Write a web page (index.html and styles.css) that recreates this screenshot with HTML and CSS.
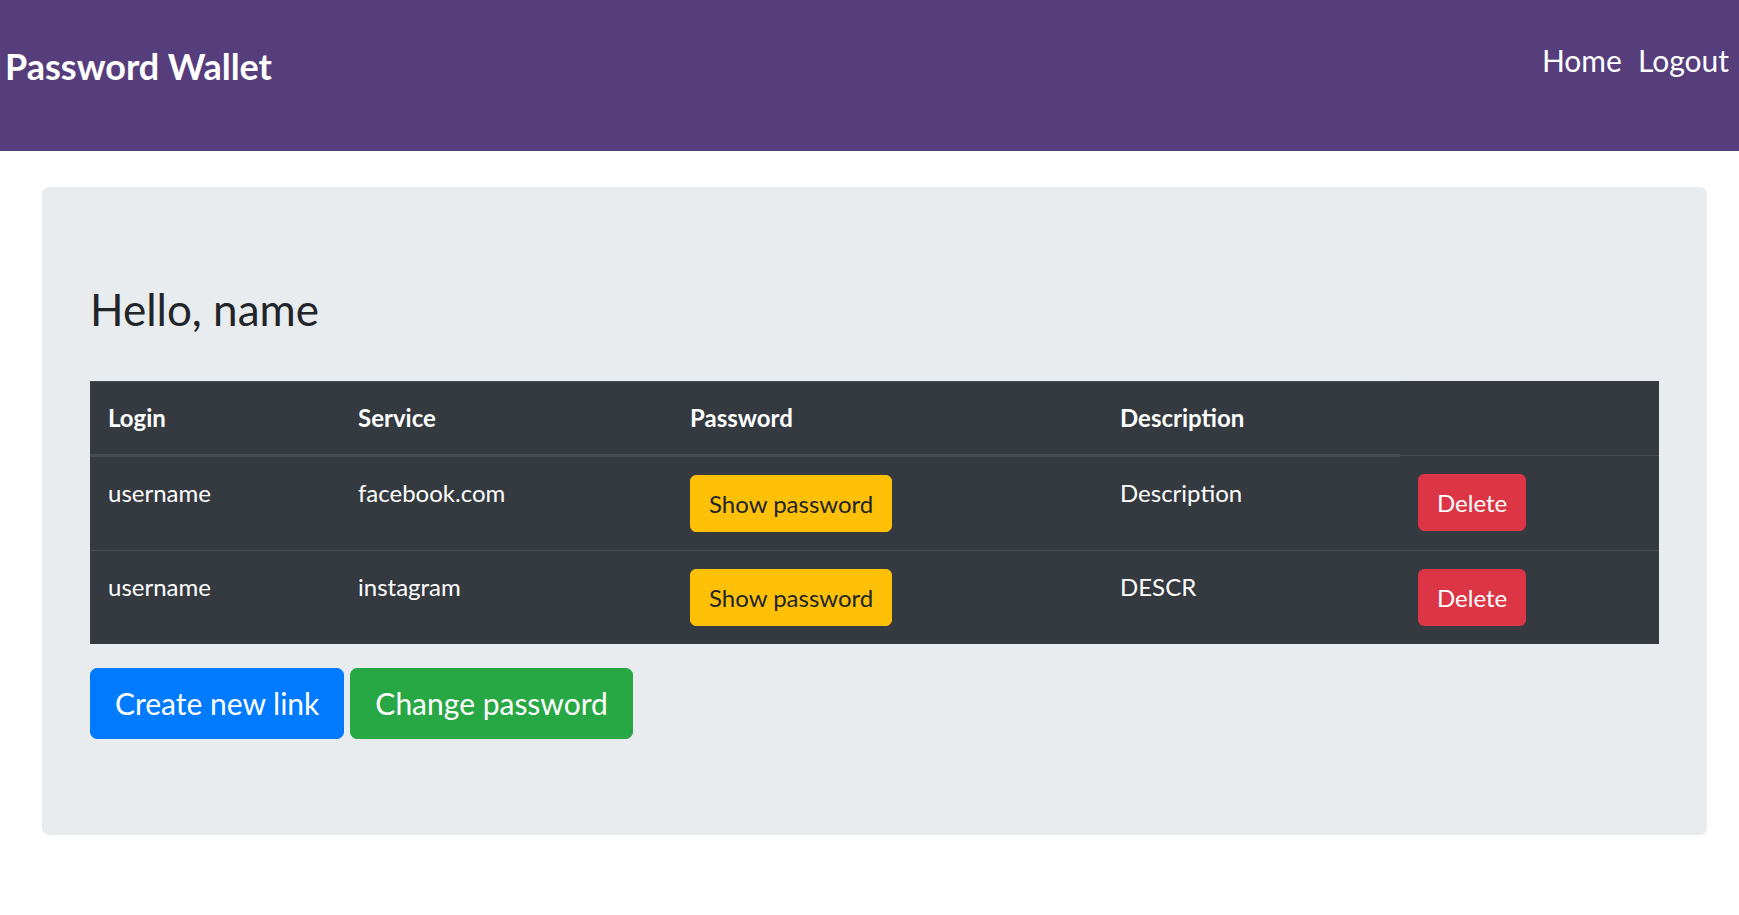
FILE: index.html
```html
<!DOCTYPE html>
<html lang="en">
<head>
<meta charset="utf-8">
<title>Password Wallet</title>
<link rel="stylesheet" href="styles.css">
</head>
<body>
<header class="topbar">
  <a class="brand" href="#">Password Wallet</a>
  <nav class="nav">
    <a class="nav-link" href="#">Home</a>
    <a class="nav-link" href="#">Logout</a>
  </nav>
</header>
<main class="jumbotron">
  <h2 class="greeting">Hello, name</h2>
  <table class="table-dark">
    <colgroup>
      <col class="c-login"><col class="c-service"><col class="c-password"><col class="c-desc"><col class="c-action">
    </colgroup>
    <thead>
      <tr>
        <th>Login</th>
        <th>Service</th>
        <th>Password</th>
        <th>Description</th>
      </tr>
    </thead>
    <tbody>
      <tr>
        <td>username</td>
        <td>facebook.com</td>
        <td><button class="btn btn-warning">Show password</button></td>
        <td>Description</td>
        <td><button class="btn btn-danger">Delete</button></td>
      </tr>
      <tr>
        <td>username</td>
        <td>instagram</td>
        <td><button class="btn btn-warning">Show password</button></td>
        <td>DESCR</td>
        <td><button class="btn btn-danger">Delete</button></td>
      </tr>
    </tbody>
  </table>
  <div class="actions">
    <button class="btn btn-lg btn-primary">Create new link</button>
    <button class="btn btn-lg btn-success">Change password</button>
  </div>
</main>
</body>
</html>
```

FILE: styles.css
```css
* { box-sizing: border-box; }

html, body {
  margin: 0;
  padding: 0;
  background: #ffffff;
  font-family: "Lato", "Open Sans", sans-serif;
  font-size: 24px;
  line-height: 1.5;
  color: #212529;
}

.topbar {
  height: 151px;
  background: #563d7c;
  display: flex;
  justify-content: space-between;
  align-items: flex-start;
  padding: 0 10px 0 5px;
}

.brand {
  margin-top: 45px;
  font-size: 36px;
  line-height: 1.2;
  font-weight: 700;
  color: #ffffff;
  text-decoration: none;
}

.nav {
  margin-top: 42px;
  display: flex;
  gap: 16px;
}

.nav-link {
  font-size: 30px;
  line-height: 1.2;
  color: #ffffff;
  text-decoration: none;
}

.jumbotron {
  display: block;
  margin: 36px 32px 0 42px;
  padding: 96px 48px;
  background: #e9ecef;
  border-radius: 7px;
}

.greeting {
  margin: 0 0 45px 0;
  font-size: 44px;
  line-height: 1.2;
  font-weight: 400;
  color: #212529;
}

.table-dark {
  width: 100%;
  border-collapse: collapse;
  background: #343a40;
  color: #ffffff;
  table-layout: fixed;
}

.c-login { width: 250px; }
.c-service { width: 332px; }
.c-password { width: 430px; }
.c-desc { width: 298px; }
.c-action { width: 259px; }

.table-dark th,
.table-dark td {
  padding: 18px;
  text-align: left;
  vertical-align: top;
  line-height: 36px;
  border-top: 1px solid #454d55;
}

.table-dark th {
  font-weight: 700;
  border-bottom: 3px solid #454d55;
}

.btn {
  display: inline-block;
  font-family: inherit;
  font-size: 24px;
  line-height: 37px;
  padding: 9px 18px;
  border: 1px solid transparent;
  border-radius: 6px;
  cursor: pointer;
}

.btn-warning { background: #ffc107; border-color: #ffc107; color: #212529; }
.btn-danger { background: #dc3545; border-color: #dc3545; color: #ffffff; }
.btn-primary { background: #007bff; border-color: #007bff; color: #ffffff; }
.btn-success { background: #28a745; border-color: #28a745; color: #ffffff; }

.btn-lg {
  font-size: 30px;
  line-height: 45px;
  padding: 12px 24px;
  border-radius: 7px;
}

.actions {
  margin-top: 24px;
  display: flex;
  gap: 6px;
}
```
